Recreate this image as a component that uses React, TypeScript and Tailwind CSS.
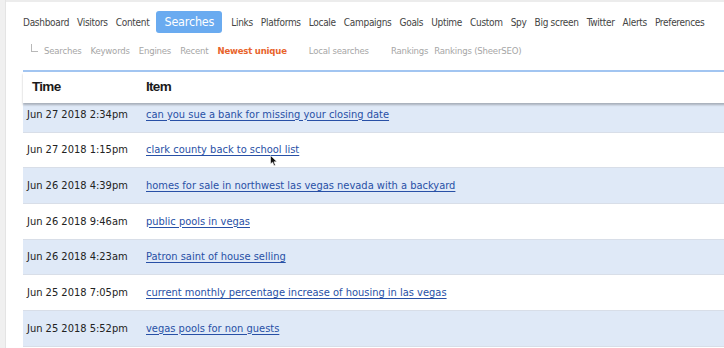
import React from "react";

const navItems = ["Dashboard", "Visitors", "Content", "Searches", "Links", "Platforms", "Locale", "Campaigns", "Goals", "Uptime", "Custom", "Spy", "Big screen", "Twitter", "Alerts", "Preferences"];

const rows = [
  ["Jun 27 2018 2:34pm", "can you sue a bank for missing your closing date"],
  ["Jun 27 2018 1:15pm", "clark county back to school list"],
  ["Jun 26 2018 4:39pm", "homes for sale in northwest las vegas nevada with a backyard"],
  ["Jun 26 2018 9:46am", "public pools in vegas"],
  ["Jun 26 2018 4:23am", "Patron saint of house selling"],
  ["Jun 25 2018 7:05pm", "current monthly percentage increase of housing in las vegas"],
  ["Jun 25 2018 5:52pm", "vegas pools for non guests"],
];

const font = { fontFamily: '"DejaVu Sans Condensed", "DejaVu Sans", sans-serif' };

export default function App() {
  return (
    <div className="relative w-[724px] h-[348px] overflow-hidden bg-white" style={font}>
      <div className="flex h-full">
        <div className="w-[6px] shrink-0 bg-[#f0f0f0] border-r border-[#e4e4e4]" />
        <div className="flex-1 flex flex-col border-t-2 border-[#ececec] pl-[17px]">
          <div className="flex items-center h-[30px] mt-[5px] text-[10px] tracking-[-0.3px] text-[#444] gap-[8px] whitespace-nowrap">
            {navItems.map((n) =>
              n === "Searches" ? (
                <span key={n} className="bg-[#6aabf0] text-white text-[12.5px] tracking-[-0.2px] rounded-[3px] px-[8px] h-[22px] leading-[22px] -ml-[1px] mr-[1px]">
                  {n}
                </span>
              ) : (
                <span key={n}>{n}</span>
              )
            )}
          </div>
          <div className="flex items-center h-[28px] text-[9.5px] tracking-[-0.2px] text-[#a6a6a6] whitespace-nowrap pl-[8px]">
            <span className="w-[7px] h-[8px] border-l border-b border-[#b8b8b8] mr-[6px] -mt-[6px]" />
            <span className="mr-[9px]">Searches</span>
            <span className="mr-[9px]">Keywords</span>
            <span className="mr-[9px]">Engines</span>
            <span className="mr-[9px]">Recent</span>
            <span className="mr-[22px] text-[#e8642c] font-bold">Newest unique</span>
            <span className="mr-[22px]">Local searches</span>
            <span className="mr-[6px]">Rankings</span>
            <span>Rankings (SheerSEO)</span>
          </div>
          <div className="mt-[5px] w-[720px] border-t-2 border-[#a2c5f1]">
            <div className="relative z-10 h-[31px] bg-white flex items-center shadow-[0_2px_2px_rgba(0,0,0,0.25)] text-[13.5px] font-bold text-[#1a1a1a] tracking-[-0.7px]" style={{ fontFamily: '"Liberation Sans", Arial, sans-serif' }}>
              <span className="w-[123px] pl-[9px]">Time</span>
              <span>Item</span>
            </div>
            <div className="-mt-[6px]">
              {rows.map(([t, item], i) => (
                <div key={i} className={`h-[35.7px] flex items-center pt-[1px] border-b border-[#d8dee8] text-[11px] ${i % 2 === 0 ? "bg-[#dfe9f7]" : "bg-white"}`}>
                  <span className="w-[123px] pl-[4px] text-[#222]">{t}</span>
                  <a className="text-[#2850a6] underline underline-offset-2 decoration-[#2850a6]">{item}</a>
                </div>
              ))}
            </div>
          </div>
        </div>
      </div>
      <svg className="absolute left-[270px] top-[155px]" width="8" height="12" viewBox="0 0 8 12">
        <path d="M0.5 0.5 L0.5 9 L2.6 7.2 L4 10.8 L5.4 10.2 L4 6.8 L7 6.8 Z" fill="#111" stroke="#fff" strokeWidth="0.6" />
      </svg>
    </div>
  );
}
